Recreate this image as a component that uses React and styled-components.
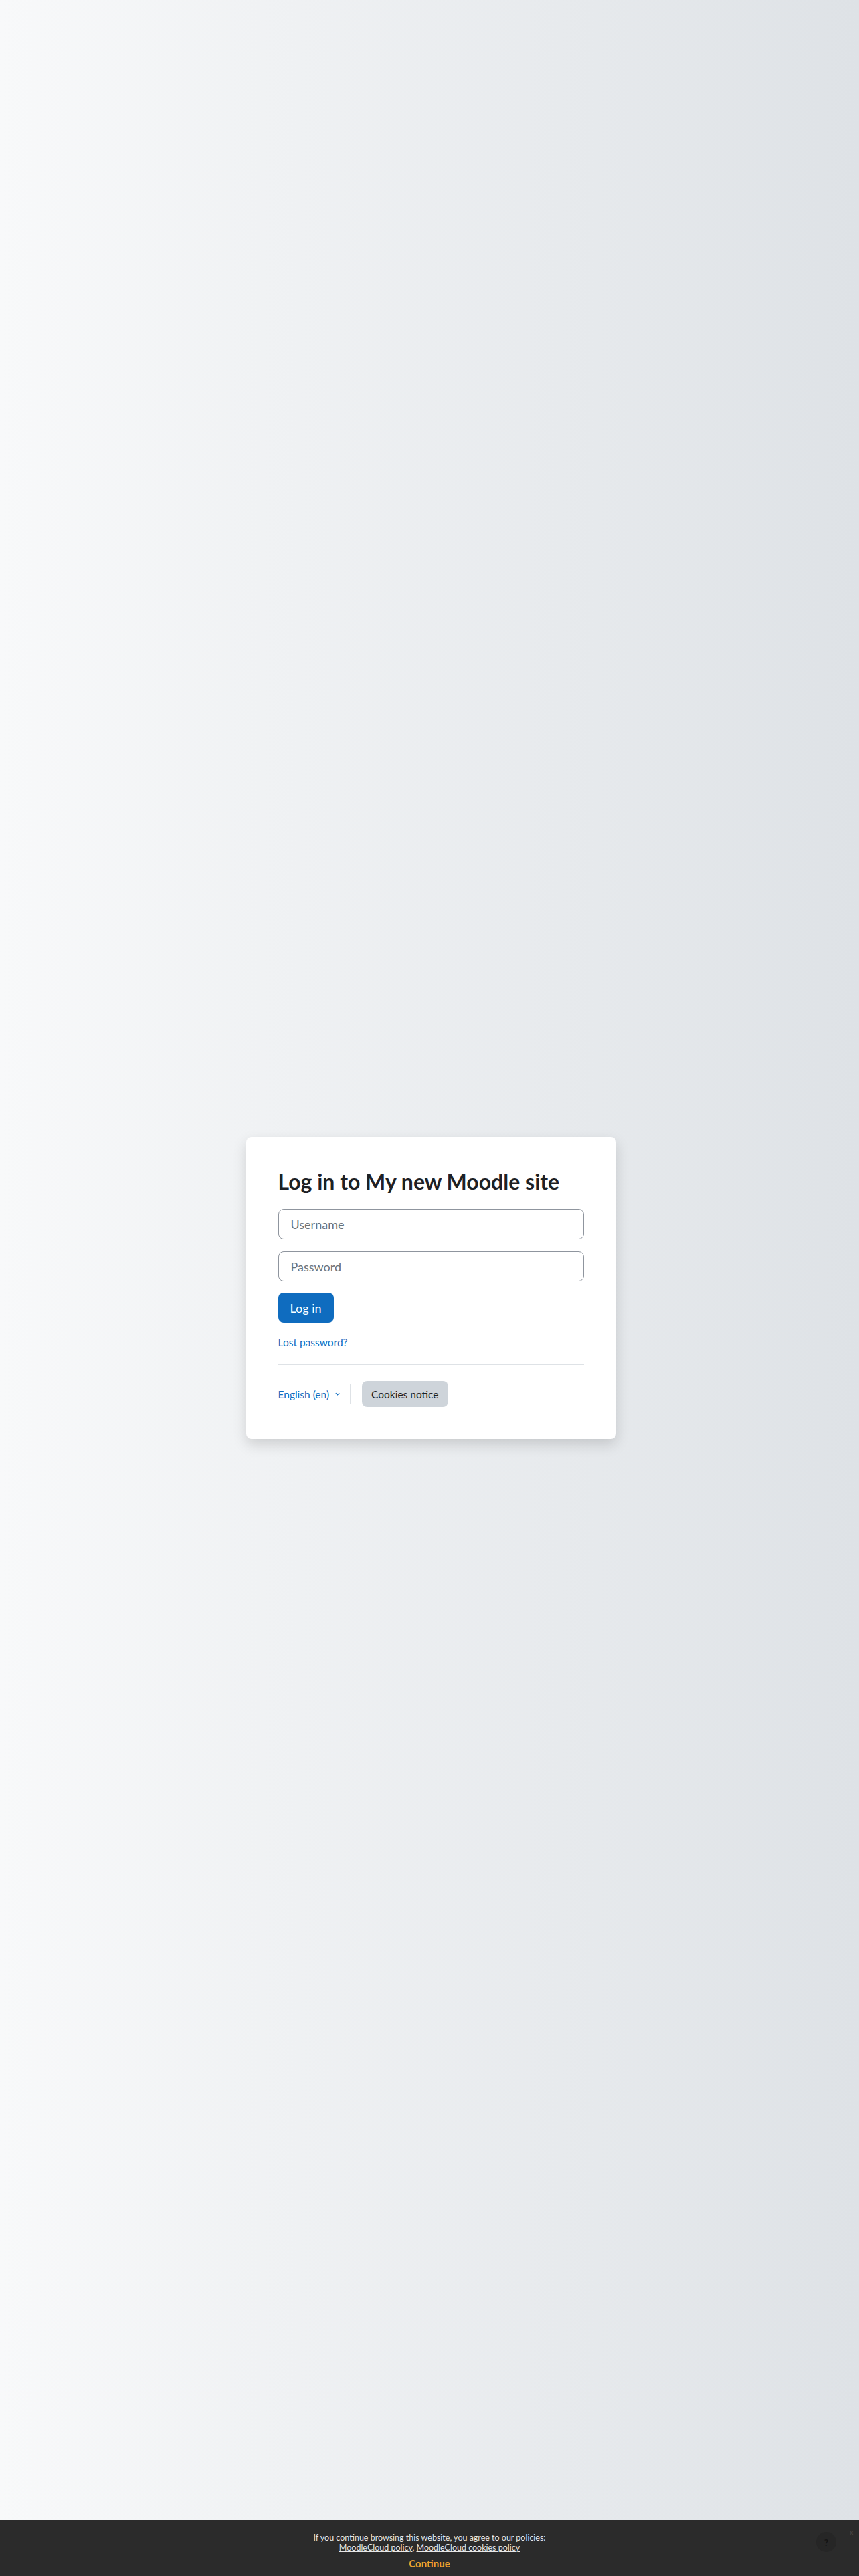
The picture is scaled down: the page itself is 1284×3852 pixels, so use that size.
import React from 'react';
import styled, { createGlobalStyle } from 'styled-components';

const GlobalStyle = createGlobalStyle`
  html, body {
    margin: 0;
    padding: 0;
  }
  body {
    font-family: Lato, "Noto Sans", "Liberation Sans", sans-serif;
    color: #1d2125;
  }
`;

const Page = styled.div`
  min-height: 100vh;
  display: flex;
  align-items: center;
  justify-content: center;
  background: linear-gradient(to right, #f8f9fa 0%, #dee2e6 100%);
`;

const Card = styled.div`
  width: 553px;
  box-sizing: border-box;
  padding: 48px;
  background: #fff;
  border-radius: 8px;
  box-shadow: 0 8px 20px rgba(0, 0, 0, 0.15);
  margin-left: 4px;
`;

const Heading = styled.h1`
  margin: 0 0 22px;
  font-size: 32px;
  line-height: 1.2;
  font-weight: 700;
  color: #1d2125;
`;

const Input = styled.input`
  display: block;
  width: 100%;
  box-sizing: border-box;
  height: 45px;
  margin-bottom: 18px;
  padding: 0 18px;
  border: 1px solid #8f959e;
  border-radius: 8px;
  font-family: inherit;
  font-size: 18px;
  color: #1d2125;
  background: #fff;
  outline: none;
  appearance: none;

  &::placeholder {
    color: #6a737b;
  }
`;

const Button = styled.button`
  display: inline-flex;
  align-items: center;
  height: 45px;
  padding: 0 18px;
  margin-top: -1px;
  border: none;
  border-radius: 8px;
  font-family: inherit;
  font-size: 18px;
  color: #fff;
  background: #0f6cbf;
  cursor: pointer;
`;

const LostLink = styled.a`
  display: block;
  margin-top: 20px;
  font-size: 15.5px;
  color: #0f6cbf;
  text-decoration: none;
`;

const Divider = styled.hr`
  margin: 24px 0 24px;
  border: 0;
  border-top: 1px solid #dee2e6;
`;

const Footer = styled.div`
  display: flex;
  align-items: center;
`;

const LangLink = styled.a`
  display: inline-flex;
  align-items: center;
  gap: 8px;
  font-size: 15.5px;
  color: #0f6cbf;
  text-decoration: none;
  padding-right: 14px;
  border-right: 1px solid #dee2e6;
  height: 30px;
`;

const CookieButton = styled.button`
  margin-left: 17px;
  height: 39px;
  padding: 0 14px;
  border: none;
  border-radius: 8px;
  background: #ced4da;
  color: #1d2125;
  font-family: inherit;
  font-size: 15.5px;
`;

const PolicyBar = styled.div`
  position: fixed;
  left: 0;
  right: 0;
  bottom: 0;
  height: 83px;
  background: #2b2b2b;
  color: #e6e6e6;
  display: flex;
  flex-direction: column;
  align-items: center;
  padding-top: 18px;
  box-sizing: border-box;
  font-size: 12.5px;
  line-height: 15px;
  text-align: center;
`;

const PolicyLink = styled.a`
  color: #e6e6e6;
  text-decoration: underline;
`;

const ContinueLink = styled.a`
  margin-top: 9px;
  color: #eea12e;
  font-weight: 700;
  font-size: 15px;
  text-decoration: none;
`;

const CloseMark = styled.span`
  position: absolute;
  right: 8px;
  top: 10px;
  color: #444;
  font-size: 13px;
`;

const HelpBubble = styled.span`
  position: absolute;
  right: 34px;
  top: 17px;
  width: 30px;
  height: 30px;
  border-radius: 50%;
  background: #262626;
  color: #141414;
  font-size: 14px;
  font-weight: 700;
  display: flex;
  align-items: center;
  justify-content: center;
`;

const Chevron = () => (
  <svg width="9" height="9" viewBox="0 0 10 10" fill="none">
    <path d="M2 3.5 5 6.5 8 3.5" stroke="#0f6cbf" strokeWidth="1.3" />
  </svg>
);

export default function App() {
  return (
    <>
      <GlobalStyle />
      <Page>
        <Card>
          <Heading>Log in to My new Moodle site</Heading>
          <Input placeholder="Username" />
          <Input type="password" placeholder="Password" />
          <Button>Log in</Button>
          <LostLink href="#">Lost password?</LostLink>
          <Divider />
          <Footer>
            <LangLink href="#">
              English ‎(en)‎ <Chevron />
            </LangLink>
            <CookieButton>Cookies notice</CookieButton>
          </Footer>
        </Card>
      </Page>
      <PolicyBar>
        <div>If you continue browsing this website, you agree to our policies:</div>
        <div>
          <PolicyLink href="#">MoodleCloud policy</PolicyLink>,{' '}
          <PolicyLink href="#">MoodleCloud cookies policy</PolicyLink>
        </div>
        <ContinueLink href="#">Continue</ContinueLink>
        <CloseMark>x</CloseMark>
        <HelpBubble>?</HelpBubble>
      </PolicyBar>
    </>
  );
}
